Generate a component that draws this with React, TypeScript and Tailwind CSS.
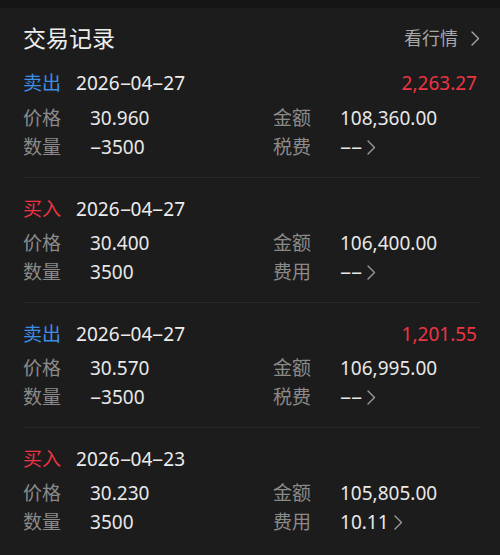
import React from "react";

type Trade = {
  side: "卖出" | "买入";
  date: string;
  profit?: string;
  price: string;
  amount: string;
  qty: string;
  feeLabel: string;
  fee: string;
};

const trades: Trade[] = [
  { side: "卖出", date: "2026-04-27", profit: "2,263.27", price: "30.960", amount: "108,360.00", qty: "-3500", feeLabel: "税费", fee: "--" },
  { side: "买入", date: "2026-04-27", price: "30.400", amount: "106,400.00", qty: "3500", feeLabel: "费用", fee: "--" },
  { side: "卖出", date: "2026-04-27", profit: "1,201.55", price: "30.570", amount: "106,995.00", qty: "-3500", feeLabel: "税费", fee: "--" },
  { side: "买入", date: "2026-04-23", price: "30.230", amount: "105,805.00", qty: "3500", feeLabel: "费用", fee: "10.11" },
];

// the app font draws "-" wide, like a minus
const Dashed: React.FC<{ text: string }> = ({ text }) => (
  <>
    {text.split("").map((ch, i) =>
      ch === "-" ? (
        <span key={i} className="inline-block w-[11px] scale-x-[2] text-center">
          -
        </span>
      ) : (
        <React.Fragment key={i}>{ch}</React.Fragment>
      ),
    )}
  </>
);

const Chevron: React.FC<{ className?: string }> = ({ className }) => (
  <svg viewBox="0 0 10 16" className={className} fill="none" stroke="currentColor" strokeWidth={1.4} strokeLinecap="round" strokeLinejoin="round">
    <polyline points="2,1.5 8.5,8 2,14.5" />
  </svg>
);

const Row: React.FC<{ label: string; value: React.ReactNode; label2: string; value2: React.ReactNode }> = ({ label, value, label2, value2 }) => (
  <div className="flex h-[29px] items-center text-[19px]">
    <div className="flex w-[250px] items-center">
      <span className="w-[67px] text-[#8a8a8a]">{label}</span>
      <span className="text-[#e8e8e8]">{value}</span>
    </div>
    <span className="w-[67px] text-[#8a8a8a]">{label2}</span>
    <span className="flex items-center text-[#e8e8e8]">{value2}</span>
  </div>
);

const TradeItem: React.FC<{ trade: Trade; first: boolean }> = ({ trade, first }) => {
  const sell = trade.side === "卖出";
  return (
    <div className={first ? "pb-[15px]" : "border-t border-[#2a2a2a] pt-[16px] pb-[15px]"}>
      <div className="flex h-[30px] items-center text-[19px]">
        <span className={`w-[53px] ${sell ? "text-[#3f8ee6]" : "text-[#ec3444]"}`}>{trade.side}</span>
        <span className="text-[#ececec]">
          <Dashed text={trade.date} />
        </span>
        {trade.profit && <span className="ml-auto mr-[3px] text-[#ec3444]">{trade.profit}</span>}
      </div>
      <div className={first ? "mt-[6px]" : "mt-[5px]"}>
        <Row label="价格" value={trade.price} label2="金额" value2={trade.amount} />
        <Row
          label="数量"
          value={<Dashed text={trade.qty} />}
          label2={trade.feeLabel}
          value2={
            <>
              <Dashed text={trade.fee} />
              <Chevron className="ml-[4px] h-[17px] w-[10px] text-[#9a9a9a]" />
            </>
          }
        />
      </div>
    </div>
  );
};

export default function App() {
  return (
    <div className="h-[555px] w-[500px] overflow-hidden bg-[#1c1c1c]" style={{ fontFamily: '"Noto Sans", "Noto Sans CJK SC", sans-serif' }}>
      <div className="h-2 bg-[#151515]" />
      <div className="flex h-[60px] items-center justify-between pl-[23px] pr-[20px]">
        <h1 className="text-[23px] text-[#ededed]">交易记录</h1>
        <div className="flex items-center text-[18px] text-[#a8a8a8]">
          看行情
          <Chevron className="ml-[12px] h-[17px] w-[10px]" />
        </div>
      </div>
      <div className="pl-[23px] pr-[20px]">
        {trades.map((t, i) => (
          <TradeItem key={i} trade={t} first={i === 0} />
        ))}
      </div>
    </div>
  );
}
